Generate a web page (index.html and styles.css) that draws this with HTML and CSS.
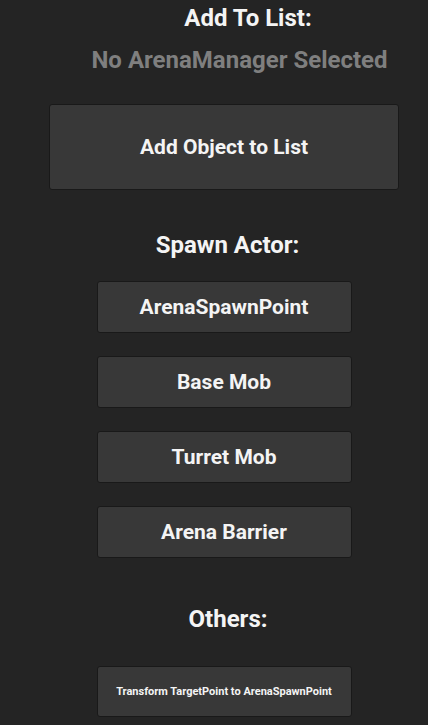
FILE: index.html
```html
<!DOCTYPE html>
<html>
<head>
<meta charset="utf-8">
<link rel="stylesheet" href="styles.css">
</head>
<body>
<div class="panel">
  <div class="heading heading-list">Add To List:</div>
  <div class="status">No ArenaManager Selected</div>
  <button class="btn btn-large">Add Object to List</button>
  <div class="heading heading-spawn">Spawn Actor:</div>
  <div class="btn-group">
    <button class="btn">ArenaSpawnPoint</button>
    <button class="btn">Base Mob</button>
    <button class="btn">Turret Mob</button>
    <button class="btn">Arena Barrier</button>
  </div>
  <div class="heading heading-others">Others:</div>
  <button class="btn btn-small">Transform TargetPoint to ArenaSpawnPoint</button>
</div>
</body>
</html>
```
FILE: styles.css
```css
html, body {
  margin: 0;
  padding: 0;
  background: #242424;
  height: 100%;
  overflow: hidden;
}
.panel {
  display: flex;
  flex-direction: column;
  align-items: center;
  padding-left: 20px;
  font-family: Roboto, "Liberation Sans", sans-serif;
  font-weight: 700;
  color: #f4f4f4;
}
.heading {
  font-size: 24px;
  line-height: 28px;
  text-align: center;
}
.heading-list {
  margin-top: 4px;
  padding-left: 48px;
}
.status {
  margin-top: 13px;
  font-size: 24px;
  line-height: 30px;
  color: #7f7f7f;
  padding-left: 31px;
}
.heading-spawn {
  margin-top: 41px;
  padding-left: 7px;
}
.heading-others {
  margin-top: 47px;
  padding-left: 8px;
}
.btn {
  display: flex;
  align-items: center;
  justify-content: center;
  box-sizing: border-box;
  width: 255px;
  height: 52px;
  background: #383838;
  border: 1px solid #191919;
  border-radius: 3px;
  color: #f4f4f4;
  font-family: Roboto, "Liberation Sans", sans-serif;
  font-weight: 700;
  font-size: 21px;
  padding: 0;
}
.btn-large {
  margin-top: 29px;
  width: 350px;
  height: 86px;
}
.btn-group {
  margin-top: 22px;
  display: flex;
  flex-direction: column;
  gap: 23px;
}
.btn-small {
  margin-top: 33px;
  height: 51px;
  font-size: 11px;
}
```
